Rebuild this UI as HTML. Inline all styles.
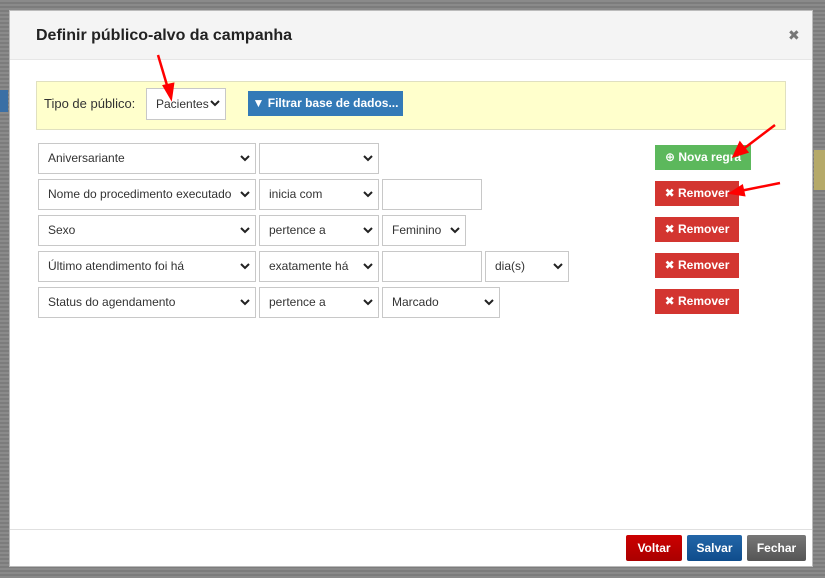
<!DOCTYPE html><html><head><style>
body{margin:0;width:825px;height:578px;overflow:hidden;background:repeating-linear-gradient(#8a8a8a 0 2px,#7c7c7c 2px 4px);font-family:"Liberation Sans","DejaVu Sans",sans-serif;position:relative}
.a{position:absolute;box-sizing:border-box}
.modal{left:9px;top:10px;width:804px;height:557px;background:#fff;border:1px solid #bbb}
.hdr{left:10px;top:11px;width:802px;height:49px;background:#f4f4f4;border-bottom:1px solid #e6e6e6}
.sel{background:#fff;border:1px solid #c8c8c8;height:31px;font-size:12px;color:#333;padding:0 0 0 9px;line-height:29px;white-space:nowrap}
.sel svg{position:absolute;right:5px;top:11px}
.btn{color:#fff;font-size:12px;font-weight:bold;text-align:center;line-height:25px;height:25px}
.red{background:#d33530}
.fb{height:26px;line-height:26px;border-radius:2px;color:#fff;font-size:12px;font-weight:bold;text-align:center}
</style></head><body>
<div class="a" style="left:0;top:90px;width:8px;height:22px;background:#3a6fa5"></div>
<div class="a" style="left:814px;top:150px;width:11px;height:40px;background:#b5a969"></div>
<div class="a modal"></div>
<div class="a hdr"></div>
<div class="a" style="left:36px;top:27px;font-size:16px;font-weight:bold;color:#222">Definir público-alvo da campanha</div>
<div class="a" style="left:788px;top:27px;font-size:14px;font-weight:bold;color:#777">✖</div>
<div class="a" style="left:36px;top:81px;width:750px;height:49px;background:#ffffcc;border:1px solid #e0e0c0"></div>
<div class="a" style="left:44px;top:96px;font-size:13px;color:#333">Tipo de público:</div>
<div class="a sel" style="left:146px;top:88px;width:80px;height:32px;line-height:31px">Pacientes<svg width="10" height="7"><polyline points="1,1 5,5 9,1" fill="none" stroke="#222" stroke-width="2"/></svg></div>
<div class="a btn" style="left:248px;top:91px;width:155px;background:#337ab7">▼ Filtrar base de dados...</div>
<div class="a sel" style="left:38px;top:143px;width:218px">Aniversariante<svg width="10" height="7"><polyline points="1,1 5,5 9,1" fill="none" stroke="#222" stroke-width="2"/></svg></div>
<div class="a sel" style="left:259px;top:143px;width:120px"><svg width="10" height="7"><polyline points="1,1 5,5 9,1" fill="none" stroke="#222" stroke-width="2"/></svg></div>
<div class="a sel" style="left:38px;top:179px;width:218px">Nome do procedimento executado<svg width="10" height="7"><polyline points="1,1 5,5 9,1" fill="none" stroke="#222" stroke-width="2"/></svg></div>
<div class="a sel" style="left:259px;top:179px;width:120px">inicia com<svg width="10" height="7"><polyline points="1,1 5,5 9,1" fill="none" stroke="#222" stroke-width="2"/></svg></div>
<div class="a sel" style="left:382px;top:179px;width:100px"></div>
<div class="a sel" style="left:38px;top:215px;width:218px">Sexo<svg width="10" height="7"><polyline points="1,1 5,5 9,1" fill="none" stroke="#222" stroke-width="2"/></svg></div>
<div class="a sel" style="left:259px;top:215px;width:120px">pertence a<svg width="10" height="7"><polyline points="1,1 5,5 9,1" fill="none" stroke="#222" stroke-width="2"/></svg></div>
<div class="a sel" style="left:382px;top:215px;width:84px">Feminino<svg width="10" height="7"><polyline points="1,1 5,5 9,1" fill="none" stroke="#222" stroke-width="2"/></svg></div>
<div class="a sel" style="left:38px;top:251px;width:218px">Último atendimento foi há<svg width="10" height="7"><polyline points="1,1 5,5 9,1" fill="none" stroke="#222" stroke-width="2"/></svg></div>
<div class="a sel" style="left:259px;top:251px;width:120px">exatamente há<svg width="10" height="7"><polyline points="1,1 5,5 9,1" fill="none" stroke="#222" stroke-width="2"/></svg></div>
<div class="a sel" style="left:382px;top:251px;width:100px"></div>
<div class="a sel" style="left:485px;top:251px;width:84px">dia(s)<svg width="10" height="7"><polyline points="1,1 5,5 9,1" fill="none" stroke="#222" stroke-width="2"/></svg></div>
<div class="a sel" style="left:38px;top:287px;width:218px">Status do agendamento<svg width="10" height="7"><polyline points="1,1 5,5 9,1" fill="none" stroke="#222" stroke-width="2"/></svg></div>
<div class="a sel" style="left:259px;top:287px;width:120px">pertence a<svg width="10" height="7"><polyline points="1,1 5,5 9,1" fill="none" stroke="#222" stroke-width="2"/></svg></div>
<div class="a sel" style="left:382px;top:287px;width:118px">Marcado<svg width="10" height="7"><polyline points="1,1 5,5 9,1" fill="none" stroke="#222" stroke-width="2"/></svg></div>
<div class="a btn" style="left:655px;top:145px;width:96px;background:#5cb85c">⊕ Nova regra</div>
<div class="a btn red" style="left:655px;top:181px;width:84px">✖ Remover</div>
<div class="a btn red" style="left:655px;top:217px;width:84px">✖ Remover</div>
<div class="a btn red" style="left:655px;top:253px;width:84px">✖ Remover</div>
<div class="a btn red" style="left:655px;top:289px;width:84px">✖ Remover</div>
<svg class="a" style="left:0;top:0" width="825" height="578"><g stroke="#f00" stroke-width="2.5" fill="#f00">
<line x1="158" y1="55" x2="169" y2="92"/><polygon points="164,86 173,84 171,98"/>
<line x1="775" y1="125" x2="742" y2="150"/><polygon points="740,143 747,152 734,156"/>
<line x1="780" y1="183" x2="740" y2="191"/><polygon points="742,186 744,195 731,193"/></g></svg>
<div class="a" style="left:10px;top:529px;width:802px;height:1px;background:#e0e0e0"></div>
<div class="a fb" style="left:626px;top:535px;width:56px;background:linear-gradient(#c00,#a00)">Voltar</div>
<div class="a fb" style="left:687px;top:535px;width:55px;background:linear-gradient(#2366a8,#0f4d8c)">Salvar</div>
<div class="a fb" style="left:747px;top:535px;width:59px;background:linear-gradient(#777,#555)">Fechar</div>
</body></html>
